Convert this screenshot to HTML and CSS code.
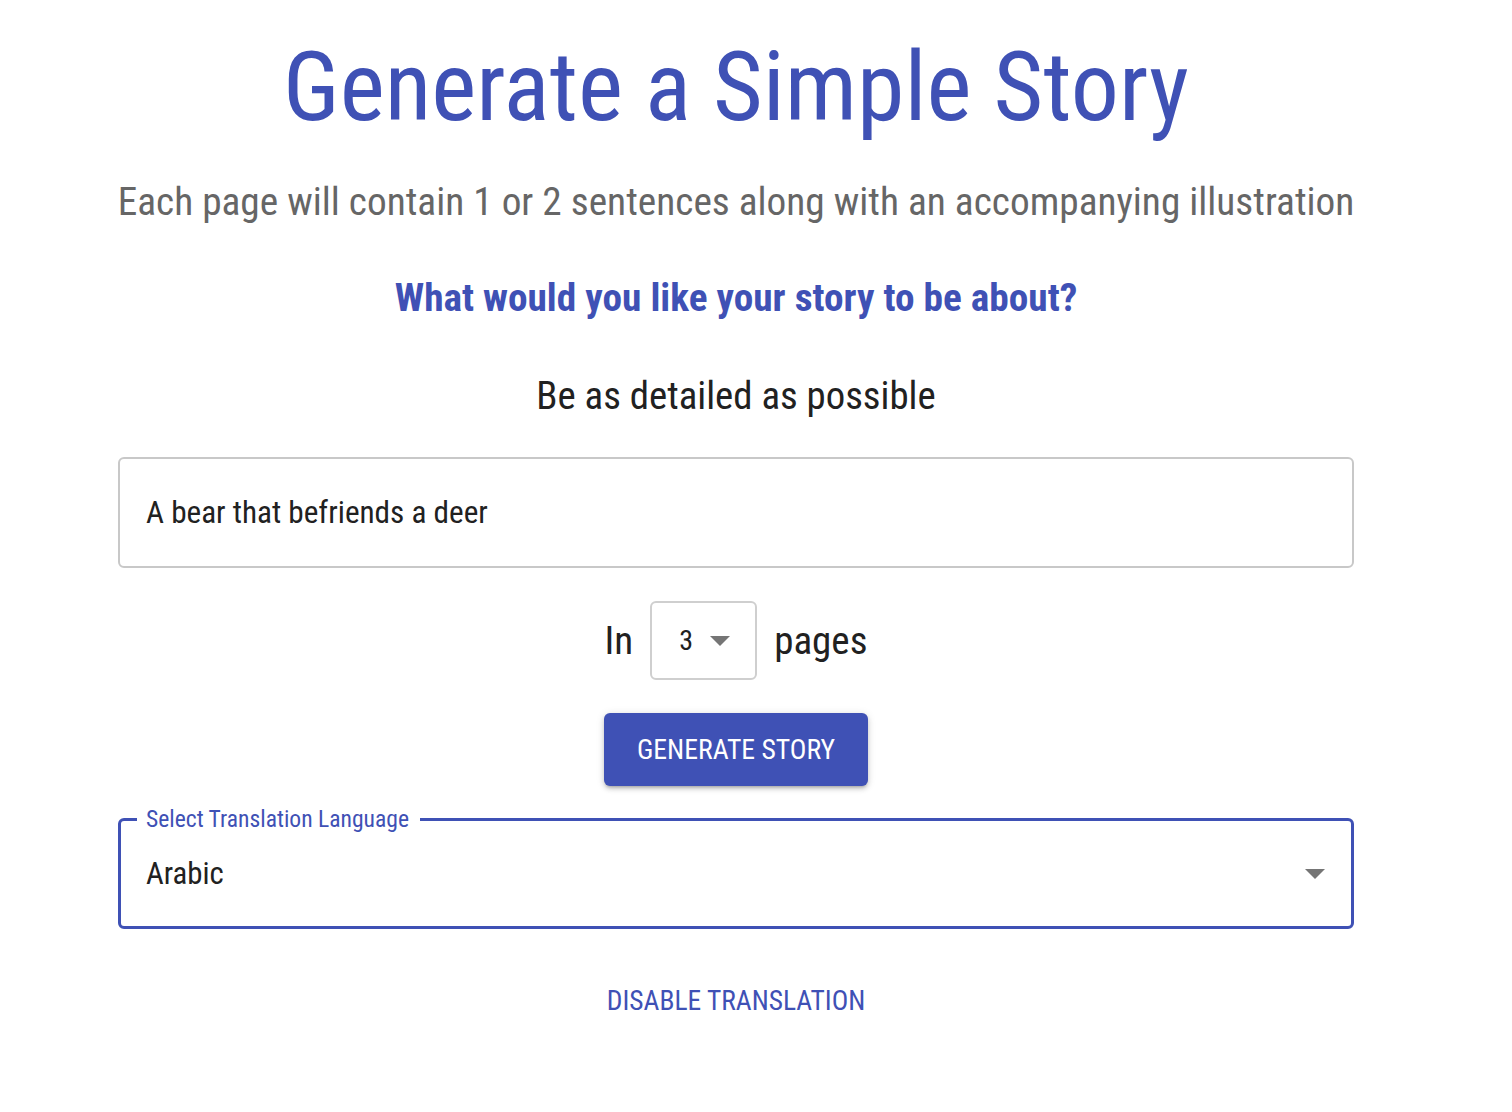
FILE: index.html
```html
<!DOCTYPE html>
<html lang="en">
<head>
<meta charset="utf-8">
<title>Generate a Simple Story</title>
<link rel="stylesheet" href="styles.css">
</head>
<body>
<main class="page">
  <h1 class="title">Generate a Simple Story</h1>
  <p class="subtitle">Each page will contain 1 or 2 sentences along with an accompanying illustration</p>
  <h2 class="question">What would you like your story to be about?</h2>
  <p class="hint">Be as detailed as possible</p>
  <div class="text-field">
    <span class="text-value">A bear that befriends a deer</span>
  </div>
  <div class="pages-row">
    <span class="pages-label">In</span>
    <div class="small-select">
      <span class="small-value">3</span>
      <svg class="caret" width="20" height="10" viewBox="0 0 10 5"><path d="M0 0l5 5 5-5z"/></svg>
    </div>
    <span class="pages-label">pages</span>
  </div>
  <button class="generate-btn">GENERATE STORY</button>
  <div class="lang-field">
    <span class="lang-label">Select Translation Language</span>
    <span class="lang-value">Arabic</span>
    <svg class="caret" width="20" height="10" viewBox="0 0 10 5"><path d="M0 0l5 5 5-5z"/></svg>
  </div>
  <button class="text-btn">DISABLE TRANSLATION</button>
</main>
</body>
</html>
```
FILE: styles.css
```css
* { box-sizing: border-box; }
html, body { margin: 0; padding: 0; background: #fff; }
body {
  font-family: "Roboto Condensed", "Roboto", "Liberation Sans Narrow", sans-serif;
  font-stretch: 75%;
  color: #212121;
}
.page {
  width: 1236px;
  margin-left: 118px;
  display: flex;
  flex-direction: column;
  align-items: center;
  text-align: center;
}
.title {
  margin: 30px 0 0;
  font-size: 96px;
  font-weight: 400;
  line-height: 1.2;
  color: #3f51b5;
  white-space: nowrap;
}
.subtitle {
  margin: 34px 0 0;
  font-size: 39.3px;
  line-height: 1.2;
  color: #666;
  white-space: nowrap;
}
.question {
  margin: 49px 0 0;
  font-size: 39.3px;
  font-weight: 700;
  line-height: 1.2;
  color: #3f51b5;
  white-space: nowrap;
}
.hint {
  margin: 50px 0 0;
  font-size: 38.8px;
  line-height: 1.2;
}
.text-field {
  margin-top: 38px;
  width: 100%;
  height: 111px;
  border: 2px solid #c8c8c8;
  border-radius: 6px;
  display: flex;
  align-items: center;
  padding: 0 26px;
}
.text-value { font-size: 31.2px; }
.pages-row {
  margin-top: 33px;
  display: flex;
  align-items: center;
  gap: 17px;
}
.pages-label { font-size: 39px; }
.small-select {
  width: 107px;
  height: 79px;
  border: 2px solid #cfcfcf;
  border-radius: 6px;
  display: flex;
  align-items: center;
  padding-left: 27px;
  gap: 17px;
}
.small-value { font-size: 28px; }
.caret { fill: #757575; flex: none; }
.generate-btn {
  margin-top: 33px;
  width: 264px;
  height: 73px;
  background: #3f51b5;
  color: #fff;
  border: none;
  border-radius: 6px;
  font-family: inherit;
  font-stretch: 75%;
  font-size: 27.7px;
  box-shadow: 0 3px 3px -2px rgba(0,0,0,.2), 0 3px 5px 0 rgba(0,0,0,.14), 0 1px 9px 0 rgba(0,0,0,.12);
}
.lang-field {
  margin-top: 32px;
  width: 100%;
  height: 111px;
  border: 3px solid #3f51b5;
  border-radius: 6px;
  padding: 0 26px 0 25px;
  display: flex;
  align-items: center;
  justify-content: space-between;
  position: relative;
}
.lang-label {
  position: absolute;
  top: -16px;
  left: 16px;
  padding: 0 11px 0 9px;
  background: #fff;
  font-size: 23.6px;
  line-height: 1.2;
  color: #3f51b5;
}
.lang-value { font-size: 30.8px; }
.text-btn {
  margin-top: 55px;
  background: none;
  border: none;
  color: #3f51b5;
  font-family: inherit;
  font-stretch: 75%;
  font-size: 27.5px;
  line-height: 1.2;
  padding: 0;
}
```
